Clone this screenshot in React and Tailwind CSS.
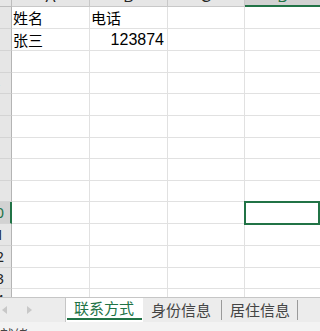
import React from "react";

const rows = [
  { n: 1, h: 22, a: "姓名", b: "电话" },
  { n: 2, h: 22, a: "张三", b: "123874", num: true },
  { n: 3, h: 22 },
  { n: 4, h: 21 },
  { n: 5, h: 22 },
  { n: 6, h: 22 },
  { n: 7, h: 21 },
  { n: 8, h: 22 },
  { n: 9, h: 21 },
  { n: 10, h: 22, sel: true },
  { n: 11, h: 22 },
  { n: 12, h: 22 },
  { n: 13, h: 21 },
  { n: 14, h: 22 },
];

const cjk = { fontFamily: '"Noto Sans CJK SC", "Noto Sans", sans-serif' };

function HeaderLetter({ children, green }) {
  return (
    <span
      className={
        "mt-[-11px] block text-[15px] leading-[15px] " +
        (green ? "text-[#217346]" : "text-[#262626]")
      }
      style={{ fontFamily: '"Liberation Sans", Arial, sans-serif' }}
    >
      {children}
    </span>
  );
}

export default function App() {
  return (
    <div className="flex h-[331px] w-[320px] flex-col overflow-hidden bg-white">
      {/* column header */}
      <div className="flex h-[7px] shrink-0 bg-[#e6e6e6]">
        <div className="w-[12px] shrink-0 border-r border-b border-[#bdbdbd]" />
        <div className="flex w-[78px] shrink-0 justify-center overflow-hidden border-r border-b border-[#c8c8c8]">
          <HeaderLetter>A</HeaderLetter>
        </div>
        <div className="flex w-[78px] shrink-0 justify-center overflow-hidden border-r border-b border-[#c8c8c8]">
          <HeaderLetter>B</HeaderLetter>
        </div>
        <div className="flex w-[77px] shrink-0 justify-center overflow-hidden border-r border-b border-[#c8c8c8]">
          <HeaderLetter>C</HeaderLetter>
        </div>
        <div className="flex w-[76px] shrink-0 justify-center overflow-hidden border-b-2 border-[#217346] bg-[#d2d2d2]">
          <HeaderLetter green>D</HeaderLetter>
        </div>
      </div>

      {/* grid */}
      <div className="flex-1 overflow-hidden">
        {rows.map((r) => (
          <div
            key={r.n}
            className={"flex shrink-0 " + (r.h === 22 ? "h-[22px]" : "h-[21px]")}
          >
            <div
              className={
                "flex w-[12px] shrink-0 items-center overflow-hidden border-b border-[#d4d4d4] " +
                (r.sel
                  ? "border-r-2 border-r-[#217346] bg-[#d2d2d2] text-[#217346]"
                  : "border-r border-r-[#b4b4b4] bg-[#e6e6e6] text-[#262626]")
              }
            >
              <div
                className="ml-[-16px] w-[23px] shrink-0 text-center text-[15px] leading-[21px]"
                style={{ fontFamily: '"Noto Sans", sans-serif' }}
              >
                {r.n}
              </div>
            </div>
            <div
              className="flex w-[78px] shrink-0 items-center border-r border-b border-[#e1e1e1] pl-[1px] text-[15px] leading-[21px] text-black"
              style={cjk}
            >
              {r.a}
            </div>
            <div
              className={
                "flex w-[78px] shrink-0 items-center border-r border-b border-[#e1e1e1] text-black " +
                (r.num ? "justify-end pr-[3px] text-[16px] leading-[21px]" : "pl-[1px] text-[15px] leading-[21px]")
              }
              style={
                r.num
                  ? { fontFamily: '"Liberation Sans", Arial, sans-serif' }
                  : cjk
              }
            >
              {r.b}
            </div>
            <div className="w-[77px] shrink-0 border-r border-b border-[#e1e1e1]" />
            <div className="relative w-[76px] shrink-0 border-r border-b border-[#e1e1e1]">
              {r.sel && (
                <div className="absolute -top-px -left-px h-[24px] w-[76px] border-2 border-[#217346]" />
              )}
            </div>
          </div>
        ))}
      </div>

      {/* sheet tabs */}
      <div className="flex h-[25px] shrink-0 border-t border-[#c6c6c6] bg-[#ececec]" style={cjk}>
        <div className="flex w-[66px] shrink-0 items-center gap-[20px] pl-[2px] border-r border-[#c6c6c6]">
          <svg width="5" height="8" viewBox="0 0 5 8">
            <polygon points="5,0 5,8 0,4" fill="#c8c8c8" />
          </svg>
          <svg width="5" height="8" viewBox="0 0 5 8">
            <polygon points="0,0 0,8 5,4" fill="#c8c8c8" />
          </svg>
        </div>
        <div className="flex w-[77px] shrink-0 flex-col bg-white">
          <div className="flex flex-1 items-center pl-[8px] text-[15px] leading-[20px] text-[#217346]">
            联系方式
          </div>
          <div className="mx-[1px] mb-[2px] h-[2px] bg-[#217346]" />
        </div>
        <div className="flex w-[79px] shrink-0 items-center pl-[8px] text-[15px] leading-[20px] text-[#444]">
          <span className="flex-1">身份信息</span>
          <span className="h-[20px] w-px bg-[#9a9a9a]" />
        </div>
        <div className="flex w-[76px] shrink-0 items-center pl-[8px] text-[15px] leading-[20px] text-[#444]">
          <span className="flex-1">居住信息</span>
          <span className="h-[20px] w-px bg-[#9a9a9a]" />
        </div>
        <div className="flex-1" />
      </div>

      {/* status bar */}
      <div className="h-[9px] shrink-0 overflow-hidden bg-[#f3f3f3]" style={cjk}>
        <div className="pt-[2px] pl-[0px] text-[14px] leading-[20px] text-[#444]">就绪</div>
      </div>
    </div>
  );
}
